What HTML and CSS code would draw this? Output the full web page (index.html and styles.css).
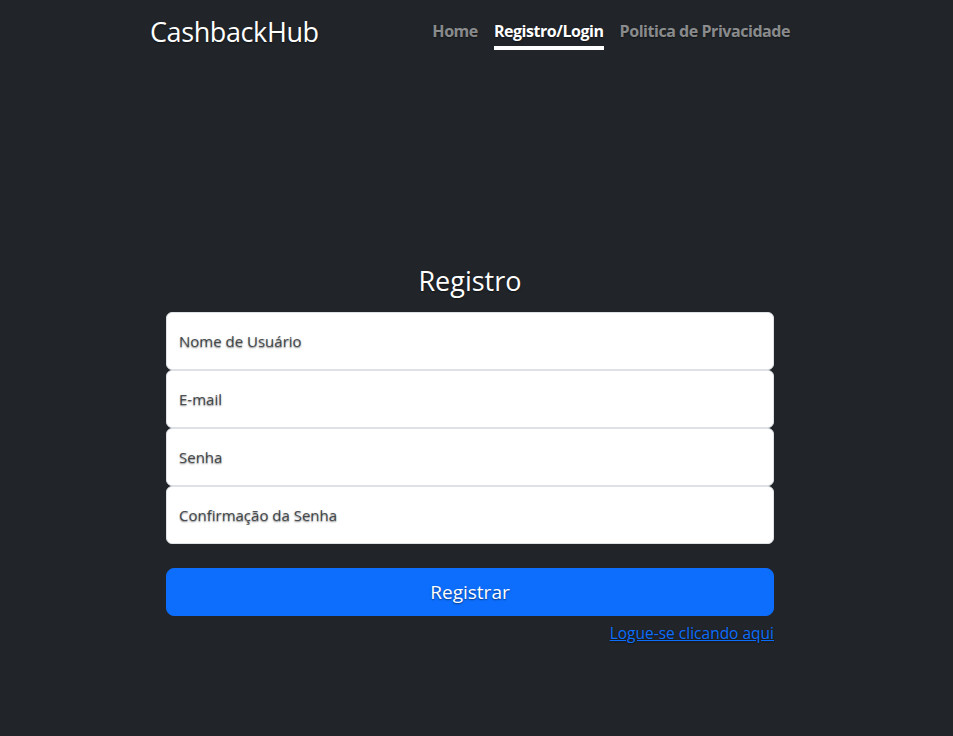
FILE: index.html
```html
<!DOCTYPE html>
<html>
<head>
  <title>CashbackHub - Registro</title>
  <meta charset="UTF-8" />
  <link rel="stylesheet" href="styles.css">
</head>
<body>
  <div class="cover">
    <header class="masthead">
      <h3 class="brand">CashbackHub</h3>
      <nav class="nav">
        <a class="nav-link" href="#">Home</a>
        <a class="nav-link active" href="#">Registro/Login</a>
        <a class="nav-link" href="#">Politica de Privacidade</a>
      </nav>
    </header>

    <!-- Register form -->
    <main class="signup">
      <h1 class="title">Registro</h1>
      <form>
        <div class="field"><input type="text" placeholder="Nome de Usuário"></div>
        <div class="field"><input type="email" placeholder="E-mail"></div>
        <div class="field"><input type="password" placeholder="Senha"></div>
        <div class="field"><input type="password" placeholder="Confirmação da Senha"></div>
        <button type="submit" class="btn-primary">Registrar</button>
      </form>
      <div class="login-link"><a href="#">Logue-se clicando aqui</a></div>
    </main>
  </div>
</body>
</html>
```

FILE: styles.css
```css
html, body { height: 100%; }
body {
  margin: 0;
  background: #212529;
  color: #fff;
  font-family: "Open Sans", sans-serif;
  font-size: 16px;
  line-height: 1.5;
  text-shadow: 0 .05rem .1rem rgba(0, 0, 0, .5);
}
.cover {
  box-sizing: border-box;
  width: 672px;
  margin-left: 134px;
  padding: 16px;
}
.masthead {
  display: flex;
  justify-content: space-between;
  align-items: flex-start;
}
.brand {
  margin: 0;
  font-size: 27px;
  font-weight: 400;
  line-height: 1.2;
  letter-spacing: -0.4px;
}
.nav { display: flex; margin-top: 0; }
.nav-link {
  margin-left: 16px;
  padding: 4px 0;
  border-bottom: 4px solid transparent;
  color: rgba(255, 255, 255, .5);
  font-weight: 700;
  font-size: 16px;
  line-height: 22px;
  letter-spacing: -0.45px;
  text-decoration: none;
}
.nav-link.active {
  color: #fff;
  border-bottom-color: #fff;
}
.signup {
  margin-top: 214px;
  padding: 0 16px;
}
.title {
  margin: 0 0 14px;
  font-size: 27px;
  font-weight: 400;
  line-height: 1.25;
  text-align: center;
}
.field input {
  display: block;
  box-sizing: border-box;
  width: 100%;
  height: 58px;
  padding: 16px 12px;
  border: 1px solid #dee2e6;
  border-radius: 6px;
  background: #fff;
  font-family: inherit;
  font-size: 15px;
  color: #212529;
  text-shadow: inherit;
}
.field input::placeholder { color: rgba(33, 37, 41, .8); }
.btn-primary {
  display: block;
  width: 100%;
  height: 48px;
  margin-top: 24px;
  padding: 8px 16px;
  border: 1px solid #0d6efd;
  border-radius: 8px;
  background: #0d6efd;
  color: #fff;
  font-family: inherit;
  font-size: 19px;
  line-height: 30px;
  text-shadow: inherit;
}
.login-link {
  margin-top: 6px;
  text-align: right;
  font-size: 15.5px;
}
.login-link a { color: #0d6efd; }
```
